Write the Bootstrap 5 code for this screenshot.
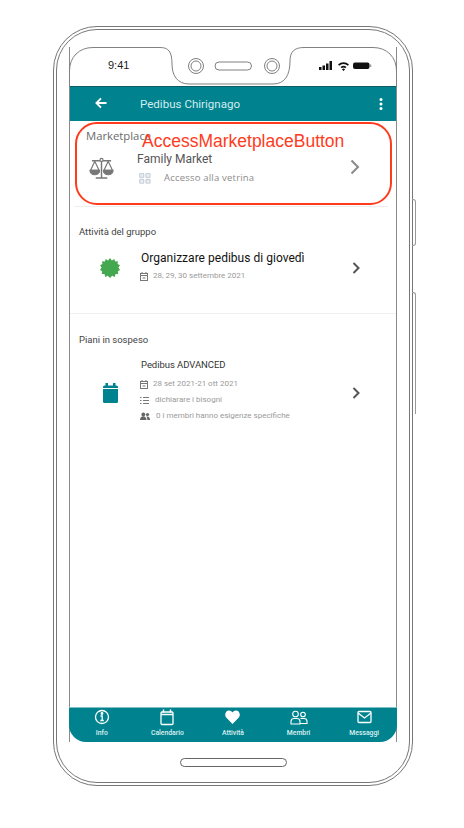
<!doctype html>
<html lang="it"><head><meta charset="utf-8">
<link rel="stylesheet" href="https://cdn.jsdelivr.net/npm/bootstrap@5.3.0/dist/css/bootstrap.min.css">
<style>
html,body{margin:0;background:#fff;font-family:Roboto,"Liberation Sans",sans-serif;overflow:hidden}
.stage{width:464px;height:828px;padding:26px 0 0 53px}
.phone-outer{position:relative;width:360px;height:760px;border:1px solid #777;border-radius:44px;padding:2px}
.phone-inner{height:100%;border:1px solid #777;border-radius:41px;padding:17px 12px 0 12px}
.screen{width:328px;height:695px;border:solid #8a8a8a;border-width:0 1px;display:flex;flex-direction:column;position:relative}
.statusbar{height:39px;flex:none}
.notch-art{position:absolute;left:-1px;top:0;width:330px;height:40px}
.side-a,.side-b{position:absolute;left:100%;width:4px;border:1px solid #999;border-left:0;border-radius:0 3px 3px 0}
.side-a{top:172px;height:47px}
.side-b{top:265px;height:122px;border-bottom:0;border-radius:0 3px 0 0}
.time{position:absolute;left:38px;top:12px;font:11px "Liberation Sans",sans-serif;color:#222}
.signal-ic{position:absolute;left:249px;top:13px}
.appbar{height:35px;flex:none;background:#00838f;color:#d5ecee;border-top:1px solid #0a5c66;padding-left:25px;padding-right:13px}
.back-ic{margin-bottom:3px}
.appbar-title{margin-left:33px;padding-top:1px;font-size:11.5px;font-weight:400;letter-spacing:.03px}
.content{flex:1 1 auto;background:#fff;min-height:0}
.market-row{height:86px;padding:8px 0 0 12px;border-bottom:1px solid #eee;margin:0 8px 0 4px}
.market-label{font:11.3px/14px "Open Sans",sans-serif;color:#6b6b6b}
.market-item{margin-top:9px;padding-right:24px}
.scale-col{width:51px;flex:none;padding:5px 0 0 3px}
.market-name{font-size:12px;color:#555;line-height:14px;margin-bottom:5px}
.market-sub{font:9.5px/14px "Open Sans",sans-serif;color:#8b8b8b;letter-spacing:.2px}
.grid-ic{margin:0 13px 0 2px}
.market-chev{margin:0 4px 3px auto}
.annot-box{position:absolute;left:5px;top:1px;width:317px;height:83px;border:2px solid #ff3b1d;border-radius:22px;pointer-events:none}
.annot-text{position:absolute;left:65px;top:8px;font:17.5px/18px "Liberation Sans",sans-serif;color:#ff3b1d;white-space:nowrap}
.section-head{font-size:9.5px;font-weight:400;color:#444;line-height:12px;padding-left:9px}
.sec-a{height:107px;padding-top:19px;border-bottom:1px solid #f0f0f0}
.row-a{margin-top:13px}
.row-b{margin-top:13px}
.icon-col{width:71px;flex:none;padding-left:9px}
.star-col{padding-top:7px}
.cal-col{padding-top:6px}
.entry-title{font-size:12px;color:#111;line-height:15px;letter-spacing:.02px}
.entry-title-sm{font-size:9.500px;font-weight:400;color:#333;line-height:12px;margin-bottom:8px;letter-spacing:-.05px}
.meta{font-size:8px;color:#9a9a9a;line-height:10px;margin-left:-1px}
.meta-gap{margin-top:5px}
.meta-row{margin-bottom:6px}
.meta-ic{width:8px;height:9px;flex:none;margin-right:5px}
.meta-ic-wide{width:9px;margin-right:6px}
.meta-ic-people{width:10px;margin-right:6px}
.chev{margin-left:auto;margin-right:36px;flex:none}
.chev-a{margin-top:4px}
.chev-b{margin-top:6px}
.sec-b{padding-top:20px}
.tabbar{height:35px;flex:none;background:#00838f;border-top:1px solid #7fc1c7;border-radius:0 0 17px 17px;margin:0 -1px;color:#dff1f2}
.tabitem{width:65.6px;font-size:6.8px;font-weight:500;line-height:8px;padding-top:1px;text-align:center}
.tabitem svg{display:block;margin:0 auto 2px;height:18px}
.homebar{width:107px;height:9px;border:1px solid #666;border-radius:5px;margin:16px 0 0 111px}
</style></head><body>
<div class="stage">
<div class="phone-outer"><div class="phone-inner">
<div class="screen">
 <svg class="notch-art" viewBox="0 0 330 40" fill="none" stroke="#808080" stroke-width="1">
  <path d="M.5 40V24C.5 10 10 .5 24 .5H91C99 .5 103 4 103 17C103 28 108 37 120 37H204C216 37 221 28 221 14C221 5 225 .5 235 .5H304C318 .5 327.500 10 327.500 24V40"/>
  <circle cx="127" cy="19" r="7.500"/><circle cx="127" cy="19" r="5"/>
  <rect x="146" y="15" width="36.500" height="8" rx="4"/>
  <circle cx="203" cy="19" r="7.500"/><circle cx="203" cy="19" r="5"/>
 </svg>
 <div class="statusbar position-relative">
  <span class="time">9:41</span>
  <svg class="signal-ic" width="54" height="12" viewBox="0 0 54 12" fill="#111">
   <rect x="0" y="7" width="2.500" height="3"/><rect x="3.500" y="5.500" width="2.500" height="4.500"/><rect x="7" y="3.500" width="2.500" height="6.500"/><rect x="10.500" y="1" width="2.500" height="9"/>
   <g transform="translate(2 0)"><path d="M17 4.500a8 8 0 0 1 11 0l-1.200 1.300a6.300 6.300 0 0 0-8.600 0zM19.500 7a4.500 4.500 0 0 1 6 0l-1.300 1.300a2.700 2.700 0 0 0-3.400 0zM22.500 11l-1.500-1.600a2 2 0 0 1 3 0z"/></g>
   <rect x="34" y="2.500" width="16.500" height="6.500" rx="2"/><rect x="51" y="4.500" width="1.300" height="2.500" fill="#999"/>
  </svg>
 </div>
 <div class="appbar d-flex align-items-center">
  <svg class="back-ic" width="12" height="12" viewBox="0 0 13 12" fill="none" stroke="#fff" stroke-width="2"><path d="M6.500 1L1.500 6l5 5M2 6h10.500"/></svg>
  <span class="appbar-title">Pedibus Chirignago</span>
  <svg class="ms-auto" width="4" height="12" viewBox="0 0 4 12" fill="#fff"><circle cx="2" cy="1.600" r="1.500"/><circle cx="2" cy="6" r="1.500"/><circle cx="2" cy="10.400" r="1.500"/></svg>
 </div>
 <div class="content position-relative">
  <div class="market-row">
   <div class="market-label">Marketplace</div>
   <div class="d-flex market-item">
    <div class="scale-col">
     <svg class="d-block" width="25" height="23" viewBox="0 0 26 24" fill="none" stroke="#777" stroke-width="1.200"><path d="M13 3v18M7 22h12M3 4h20" stroke-width="1.500"/><circle cx="13" cy="3" r="1.600" fill="#fff"/><path d="M6 4.500L1.500 14h9zM20 4.500L15.500 14h9z"/><path d="M1 14a5 4.500 0 0 0 10 0zM15 14a5 4.500 0 0 0 10 0z" fill="#777"/></svg>
    </div>
    <div>
     <div class="market-name">Family Market</div>
     <div class="d-flex align-items-center market-sub">
      <svg class="grid-ic" width="12" height="11" viewBox="0 0 12 11" fill="#eef1f5" stroke="#ccd3dc" stroke-width="1.300"><rect x=".7" y=".7" width="4" height="3.600" rx=".6"/><rect x="7" y=".7" width="4" height="3.600" rx=".6"/><rect x=".7" y="6.500" width="4" height="3.600" rx=".6"/><rect x="7" y="6.500" width="4" height="3.600" rx=".6"/></svg>
      Accesso alla vetrina
     </div>
    </div>
    <svg class="market-chev align-self-center" width="10" height="16" viewBox="0 0 10 16" fill="none" stroke="#8a8a8a" stroke-width="2"><path d="M1.500 1.500L8 8l-6.500 6.500"/></svg>
   </div>
  </div>
  <div class="sec-a">
   <div class="section-head">Attività del gruppo</div>
   <div class="d-flex row-a">
    <div class="icon-col star-col d-flex justify-content-center align-items-start">
     <svg width="20" height="20" viewBox="0 0 20 20" fill="#43a84f"><polygon points="10,0 11.900,2.400 14.300,.9 15.100,3.600 17.900,3.200 17.600,6 20,7.200 18.400,9.600 20,12 17.800,13.300 18.300,16.100 15.500,16.100 14.800,18.900 12.200,17.800 10,20 7.800,17.800 5.200,18.900 4.500,16.100 1.700,16.100 2.200,13.300 0,12 1.600,9.600 0,7.200 2.400,6 2.100,3.200 4.900,3.600 5.700,.9 8.100,2.400"/></svg>
    </div>
    <div>
     <div class="entry-title">Organizzare pedibus di giovedì</div>
     <div class="d-flex align-items-center meta meta-gap">
      <svg class="meta-ic" viewBox="0 0 8 9" fill="none" stroke="#777"><rect x=".5" y="1.500" width="7" height="7"/><path d="M.5 3.500h7M2 0v2M6 0v2M2.500 6h3"/></svg>
      28, 29, 30 settembre 2021
     </div>
    </div>
    <svg class="chev chev-a align-self-center" width="8" height="12" viewBox="0 0 8 12" fill="none" stroke="#555" stroke-width="2"><path d="M1.500 1l5 5-5 5"/></svg>
   </div>
  </div>
  <div class="sec-b">
   <div class="section-head">Piani in sospeso</div>
   <div class="d-flex row-b">
    <div class="icon-col cal-col d-flex justify-content-center align-items-center">
     <svg width="15" height="20" viewBox="0 0 15 20" fill="#00838f"><rect x="0" y="2.500" width="15" height="17.500" rx="1.500"/><rect x="2.500" y="0" width="2.500" height="4"/><rect x="10" y="0" width="2.500" height="4"/><rect x="0" y="5" width="15" height="1" fill="#fff"/></svg>
    </div>
    <div>
     <div class="entry-title-sm">Pedibus ADVANCED</div>
     <div class="d-flex align-items-center meta meta-row">
      <svg class="meta-ic" viewBox="0 0 8 9" fill="none" stroke="#777"><rect x=".5" y="1.500" width="7" height="7"/><path d="M.5 3.500h7M2 0v2M6 0v2M2.500 6h3"/></svg>
      28 set 2021-21 ott 2021
     </div>
     <div class="d-flex align-items-center meta meta-row">
      <svg class="meta-ic meta-ic-wide" viewBox="0 0 9 9" fill="none" stroke="#777"><path d="M3 1.500h6M3 4.500h6M3 7.500h6M0 1.500h1.500M0 4.500h1.500M0 7.500h1.500"/></svg>
      dichiarare i bisogni
     </div>
     <div class="d-flex align-items-center meta">
      <svg class="meta-ic meta-ic-people" viewBox="0 0 10 9" fill="#666"><circle cx="3.300" cy="2.500" r="1.900"/><circle cx="7.500" cy="2.500" r="1.600"/><path d="M0 8c0-5 6.500-5 6.500 0zM7.300 8c0-2-.5-3-1-3.400C8 4 10 5 10 8z"/></svg>
      0 i membri hanno esigenze specifiche
     </div>
    </div>
    <svg class="chev chev-b align-self-center" width="8" height="12" viewBox="0 0 8 12" fill="none" stroke="#555" stroke-width="2"><path d="M1.500 1l5 5-5 5"/></svg>
   </div>
  </div>
  <div class="annot-box"><span class="annot-text">AccessMarketplaceButton</span></div>
 </div>
 <div class="tabbar d-flex">
  <div class="tabitem"><svg width="16" height="18" viewBox="0 0 16 18" fill="none" stroke="#fff" stroke-width="1.300"><circle cx="8" cy="8" r="6.500"/><path d="M6.500 7h1.700v4.500M6.300 11.500h3.500"/><circle cx="8" cy="4.500" r=".8" fill="#fff"/></svg>Info</div>
  <div class="tabitem"><svg width="14" height="18" viewBox="0 0 14 18" fill="none" stroke="#fff" stroke-width="1.300"><rect x="1" y="3" width="12" height="12.500" rx="1"/><path d="M1 5.500h12M3.500 .5v3M10.500 .5v3" stroke-width="1.500"/></svg>Calendario</div>
  <div class="tabitem"><svg width="15" height="18" viewBox="0 0 15 18" fill="#fff"><path d="M7.500 15L1.200 8.500C-1 6 .6 1.500 4 1.500c1.500 0 2.700.8 3.500 2 .8-1.200 2-2 3.500-2 3.400 0 5 4.500 2.800 7z"/></svg>Attività</div>
  <div class="tabitem"><svg width="18" height="18" viewBox="0 0 18 18" fill="none" stroke="#fff" stroke-width="1.100"><circle cx="5.500" cy="5" r="2.800"/><circle cx="13" cy="5.500" r="2.300"/><path d="M1 15v-2.500c0-2 1-3 3-3h3c2 0 3 1 3 3V15zM10.500 9.500h3.500c2 0 3 1 3 2.800V14.500h-7"/></svg>Membri</div>
  <div class="tabitem"><svg width="15" height="18" viewBox="0 0 15 18" fill="none" stroke="#fff" stroke-width="1.300"><rect x="1" y="2.500" width="13" height="11" rx="1"/><path d="M1 4l6.500 5L14 4"/></svg>Messaggi</div>
 </div>
</div>
<div class="homebar"></div>
</div>
<span class="side-a"></span><span class="side-b"></span>
</div>
</div>
</body></html>
